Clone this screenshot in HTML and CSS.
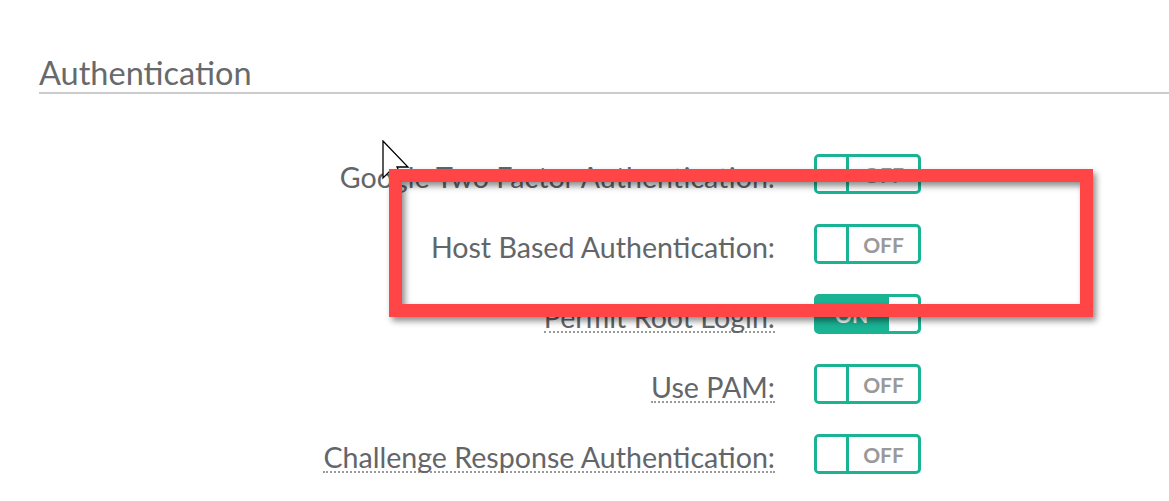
FILE: index.html
```html
<!DOCTYPE html>
<html>
<head>
<meta charset="utf-8">
<link rel="stylesheet" href="styles.css">
</head>
<body>
<div class="page">
  <h2 class="section-title">Authentication</h2>
  <div class="form">
    <div class="row">
      <span class="label">Google Two Factor Authentication:</span>
      <div class="switch off"><span class="knob"></span><span class="state">OFF</span></div>
    </div>
    <div class="row">
      <span class="label">Host Based Authentication:</span>
      <div class="switch off"><span class="knob"></span><span class="state">OFF</span></div>
    </div>
    <div class="row">
      <span class="label hint">Permit Root Login:</span>
      <div class="switch on"><span class="state">ON</span><span class="knob"></span></div>
    </div>
    <div class="row">
      <span class="label hint">Use PAM:</span>
      <div class="switch off"><span class="knob"></span><span class="state">OFF</span></div>
    </div>
    <div class="row">
      <span class="label hint">Challenge Response Authentication:</span>
      <div class="switch off"><span class="knob"></span><span class="state">OFF</span></div>
    </div>
  </div>
</div>
<svg class="cursor" width="30" height="44" viewBox="0 0 30 44">
  <polygon points="1,1 1,38 9,30 15,43 21,40 15,27 26,27" fill="#fff" stroke="#000" stroke-width="1.3" stroke-linejoin="miter"/>
</svg>
<div class="highlight"></div>
</body>
</html>
```
FILE: styles.css
```css
html, body {
  margin: 0;
  padding: 0;
  background: #fff;
}
body {
  font-family: "Lato", "Open Sans", sans-serif;
  color: #676a6c;
  overflow: hidden;
}
.page {
  padding-left: 39px;
}
.section-title {
  margin: 54px 0 0 0;
  font-size: 32.5px;
  font-weight: 400;
  line-height: 38px;
  color: #676a6c;
  border-bottom: 2px solid #cccccc;
}
.form {
  display: flex;
  flex-direction: column;
  gap: 30px;
  padding-top: 60px;
}
.row {
  display: grid;
  grid-template-columns: 736px 107px;
  column-gap: 39px;
  height: 40px;
  align-items: start;
}
.label {
  justify-self: end;
  font-size: 28.6px;
  line-height: 28px;
  margin-top: 9px;
  color: #636669;
}
.label.hint {
  border-bottom: 2px dotted #9a9a9a;
}
.switch {
  box-sizing: border-box;
  width: 107px;
  height: 40px;
  border: 3px solid #1ab394;
  border-radius: 5px;
  display: flex;
  overflow: hidden;
}
.switch .knob {
  width: 29px;
  background: #fff;
}
.switch.off .knob {
  border-right: 3px solid #1ab394;
}
.switch.on .knob {
  border-left: 3px solid #1ab394;
  border-radius: 0 2px 2px 0;
}
.switch .state {
  flex: 1;
  display: flex;
  align-items: center;
  justify-content: center;
  font-size: 21px;
  font-weight: 700;
  color: #999999;
}
.switch.on {
  background: #1ab394;
}
.switch.on .state {
  color: #fff;
}
.cursor {
  position: absolute;
  left: 382px;
  top: 140px;
}
.highlight {
  position: absolute;
  left: 389px;
  top: 169px;
  width: 704px;
  height: 148px;
  box-sizing: border-box;
  border: 13px solid #ff4545;
  filter: drop-shadow(3px 4px 3px rgba(0, 0, 0, 0.45));
}
```
